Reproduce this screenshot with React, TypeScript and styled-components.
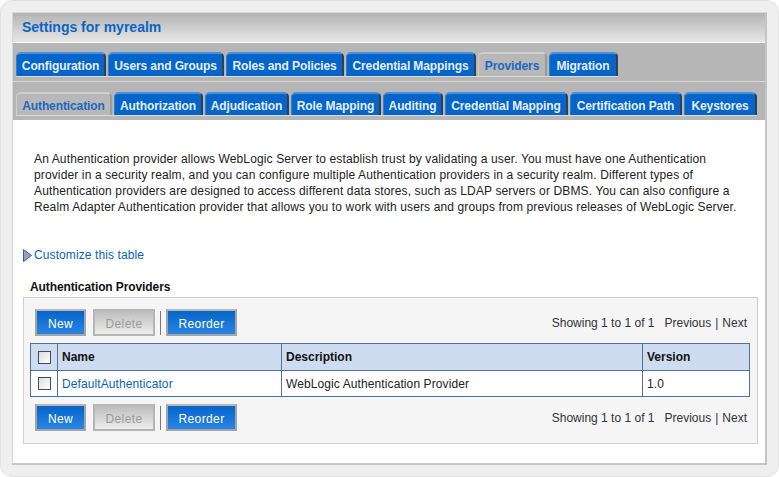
import * as React from 'react';
import styled, { createGlobalStyle } from 'styled-components';

const GlobalStyle = createGlobalStyle`
  html, body { margin: 0; padding: 0; background: #fff; }
  body { font-family: "Liberation Sans", Arial, sans-serif; font-size: 12px; color: #222; }
  * { box-sizing: border-box; }
`;

const Frame = styled.div`
  width: 779px;
  height: 477px;
  padding: 12px 11px 10px 12px;
  background: #efefef;
  border: 1px solid #e2e2e2;
  border-radius: 12px;
  overflow: hidden;
`;

const Panel = styled.div`
  height: 100%;
  margin: -1px 0 0 -1px;
  background: #fff;
  border: 1px solid #d8d8d8;
  border-right: 2px solid #c4c4c4;
  border-bottom: 2px solid #c4c4c4;
  display: flex;
  flex-direction: column;
`;

const Title = styled.div`
  height: 30px;
  padding: 0 0 2px 9px;
  display: flex;
  align-items: center;
  font-size: 14px;
  font-weight: bold;
  color: #0a64c4;
  background: linear-gradient(#b4b4b4, #e6e6e6);
  border-bottom: 1px solid #fff;
`;

const TabBand = styled.div<{ $h: number }>`
  height: ${({ $h }) => $h}px;
  padding: 0 0 4px 3px;
  display: flex;
  align-items: flex-end;
  background: #b6b6b6;
  & + & { border-top: 1px solid #d8d8d8; }
`;

const TabRow = styled.div`
  display: flex;
  align-items: flex-end;
  gap: 2px;
  border-bottom: 1px solid #dcdcdc;
`;

const Tab = styled.a<{ $w: number; $h: number; $pad: number; $active?: boolean }>`
  width: ${({ $w }) => $w}px;
  height: ${({ $h }) => $h}px;
  padding-top: ${({ $pad }) => $pad}px;
  display: flex;
  align-items: center;
  justify-content: center;
  font-size: 12px;
  font-weight: bold;
  letter-spacing: -0.1px;
  white-space: nowrap;
  border-radius: 5px 5px 0 0;
  color: ${({ $active }) => ($active ? '#1a68c0' : '#e6eefa')};
  background: ${({ $active }) => ($active ? '#b8b8b8' : '#0565c8')};
  border-top: 2px solid ${({ $active }) => ($active ? '#cfcfcf' : '#4a90dc')};
  border-left: 1px solid ${({ $active }) => ($active ? '#cfcfcf' : '#2f7fd4')};
  border-right: 2px solid ${({ $active }) => ($active ? '#9a9a9a' : '#333f4c')};
`;

const Body = styled.div`
  flex: 1;
  padding: 31px 10px 0 10px;
  background: #fff;
`;

const Intro = styled.p`
  margin: 0 0 0 11px;
  white-space: nowrap;
  font-size: 12px;
  line-height: 16px;
  letter-spacing: 0.13px;
  color: #222;
`;

const CustomizeRow = styled.div`
  margin-top: 32px;
  height: 16px;
  display: flex;
  align-items: center;
  gap: 2px;
`;

const Link = styled.a`
  color: #0a64b8;
  font-size: 12px;
  letter-spacing: 0.1px;
`;

const TableTitle = styled.div`
  margin: 16px 0 0 7px;
  height: 16px;
  line-height: 16px;
  font-size: 12px;
  font-weight: bold;
  letter-spacing: -0.1px;
  color: #111;
`;

const Box = styled.div`
  margin-top: 2px;
  width: 735px;
  height: 147px;
  padding: 11px 6px 0 6px;
  background: #f5f5f5;
  border: 1px solid #cfcfcf;
`;

const Controls = styled.div<{ $before?: number; $after?: number }>`
  height: 27px;
  display: flex;
  align-items: center;
  justify-content: space-between;
  margin-top: ${({ $before }) => $before ?? 0}px;
  margin-bottom: ${({ $after }) => $after ?? 0}px;
`;

const Buttons = styled.div`
  margin-left: 5px;
  display: flex;
  align-items: center;
`;

const Button = styled.button<{ $w: number; $off?: boolean }>`
  width: ${({ $w }) => $w}px;
  height: 27px;
  padding: 3px 0 0;
  font-family: inherit;
  font-size: 12px;
  letter-spacing: 0.4px;
  color: ${({ $off }) => ($off ? '#9a9a9a' : '#fff')};
  background: ${({ $off }) =>
    $off ? 'linear-gradient(#bdbdbd, #ededed)' : 'linear-gradient(#0565c8, #2a86e4)'};
  border: 2px solid ${({ $off }) => ($off ? '#b4b4b4' : '#a4a4a4')};
  border-top-color: #b8b8b8;
  margin-right: 7px;
`;

const Divider = styled.span`
  width: 1px;
  height: 24px;
  margin: 0 5px 0 -2px;
  background: #777;
`;

const Pager = styled.div`
  margin-right: 4px;
  font-size: 12px;
  color: #333;
  display: flex;
  gap: 4px;
`;

const PagerGap = styled.span`
  margin-left: 6px;
`;

const Table = styled.table`
  width: 720px;
  table-layout: fixed;
  border-collapse: collapse;
  border: 1px solid #4f7298;
`;

const Th = styled.th<{ $w?: number }>`
  ${({ $w }) => ($w ? `width: ${$w}px;` : '')}
  height: 27px;
  padding: 0 4px;
  text-align: left;
  font-size: 12px;
  font-weight: bold;
  color: #111;
  background: #cfdcef;
  border: 1px solid #4f7298;
`;

const Td = styled.td`
  height: 26px;
  padding: 0 4px;
  font-size: 12px;
  letter-spacing: 0.1px;
  color: #222;
  background: #fff;
  border: 1px solid #4f7298;
`;

const CheckCell = styled.div`
  display: flex;
  justify-content: center;
`;

const Check = styled.span`
  width: 13px;
  height: 13px;
  border: 1px solid #2f4f74;
  background: linear-gradient(135deg, #dcdcd6, #fff);
`;

const Arrow = () => (
  <svg width="9" height="13" viewBox="0 0 9 13">
    <path d="M0.5 0.5 L8.5 6.5 L0.5 12.5 Z" fill="#8fa6c8" stroke="#3f5f8f" strokeWidth="1" />
  </svg>
);

const ButtonBar = () => (
  <Buttons>
    <Button $w={51}>New</Button>
    <Button $w={62} $off>Delete</Button>
    <Divider />
    <Button $w={71}>Reorder</Button>
  </Buttons>
);

const Paging = () => (
  <Pager>
    <span>Showing 1 to 1 of 1</span>
    <PagerGap>Previous</PagerGap>
    <span>|</span>
    <span>Next</span>
  </Pager>
);

const tabsTop: [string, number, boolean?][] = [
  ['Configuration', 90],
  ['Users and Groups', 116],
  ['Roles and Policies', 118],
  ['Credential Mappings', 130],
  ['Providers', 69, true],
  ['Migration', 69],
];

const tabsBottom: [string, number, boolean?][] = [
  ['Authentication', 96, true],
  ['Authorization', 89],
  ['Adjudication', 84],
  ['Role Mapping', 90],
  ['Auditing', 60],
  ['Credential Mapping', 123],
  ['Certification Path', 112],
  ['Keystores', 73],
];

export default function App() {
  return (
    <>
      <GlobalStyle />
      <Frame>
        <Panel>
          <Title>Settings for myrealm</Title>
          <TabBand $h={38}>
            <TabRow>
              {tabsTop.map(([label, w, active]) => (
                <Tab key={label} $w={w} $h={24} $pad={1} $active={active}>{label}</Tab>
              ))}
            </TabRow>
          </TabBand>
          <TabBand $h={39}>
            <TabRow>
              {tabsBottom.map(([label, w, active]) => (
                <Tab key={label} $w={w} $h={23} $pad={2} $active={active}>{label}</Tab>
              ))}
            </TabRow>
          </TabBand>
          <Body>
            <Intro>
              An Authentication provider allows WebLogic Server to establish trust by validating a user. You must have one Authentication<br />
              provider in a security realm, and you can configure multiple Authentication providers in a security realm. Different types of<br />
              Authentication providers are designed to access different data stores, such as LDAP servers or DBMS. You can also configure a<br />
              Realm Adapter Authentication provider that allows you to work with users and groups from previous releases of WebLogic Server.
            </Intro>
            <CustomizeRow>
              <Arrow />
              <Link>Customize this table</Link>
            </CustomizeRow>
            <TableTitle>Authentication Providers</TableTitle>
            <Box>
              <Controls $after={7}>
                <ButtonBar />
                <Paging />
              </Controls>
              <Table>
                <thead>
                  <tr>
                    <Th $w={27}><CheckCell><Check /></CheckCell></Th>
                    <Th $w={224}>Name</Th>
                    <Th $w={361}>Description</Th>
                    <Th>Version</Th>
                  </tr>
                </thead>
                <tbody>
                  <tr>
                    <Td><CheckCell><Check /></CheckCell></Td>
                    <Td><Link>DefaultAuthenticator</Link></Td>
                    <Td>WebLogic Authentication Provider</Td>
                    <Td>1.0</Td>
                  </tr>
                </tbody>
              </Table>
              <Controls $before={7}>
                <ButtonBar />
                <Paging />
              </Controls>
            </Box>
          </Body>
        </Panel>
      </Frame>
    </>
  );
}
